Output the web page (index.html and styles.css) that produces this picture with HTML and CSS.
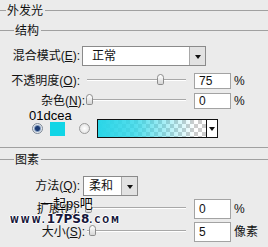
FILE: index.html
```html
<!DOCTYPE html>
<html lang="zh-CN">
<head>
    <meta charset="UTF-8">
    <meta name="viewport" content="width=device-width, initial-scale=1.0">
    <title>外发光</title>
    <link rel="stylesheet" href="styles.css">
</head>
<body>
    <div class="panel">
        <div class="legend legend-main">
            <span class="legend-line legend-lead"></span>
            <span class="legend-text">外发光</span>
            <span class="legend-line legend-rest"></span>
        </div>

        <div class="group group-structure">
            <div class="legend legend-sub">
                <span class="legend-line legend-lead"></span>
                <span class="legend-text">结构</span>
                <span class="legend-line legend-rest"></span>
            </div>

            <div class="row row-blend">
                <label class="label">混合模式(<u>E</u>):</label>
                <div class="select select-blend">
                    <span class="select-value">正常</span>
                    <span class="select-arrow"></span>
                </div>
            </div>

            <div class="row row-opacity">
                <label class="label">不透明度(<u>O</u>):</label>
                <div class="slider"><span class="slider-thumb" style="left: 73px;"></span></div>
                <div class="field">75</div>
                <span class="unit">%</span>
            </div>

            <div class="row">
                <label class="label label-wide">杂色(<u>N</u>):</label>
                <div class="slider"><span class="slider-thumb" style="left: 2px;"></span></div>
                <div class="field">0</div>
                <span class="unit">%</span>
            </div>

            <div class="note">01dcea</div>

            <div class="row row-color">
                <span class="radio radio-on"></span>
                <span class="swatch"></span>
                <span class="radio"></span>
                <div class="gradient">
                    <span class="gradient-fill"></span>
                    <span class="gradient-arrow"></span>
                </div>
            </div>
        </div>

        <div class="group group-elements">
            <div class="legend legend-sub legend-elements">
                <span class="legend-line legend-lead"></span>
                <span class="legend-text">图素</span>
                <span class="legend-line legend-rest"></span>
            </div>

            <div class="row row-method">
                <label class="label">方法(<u>Q</u>):</label>
                <div class="select select-method">
                    <span class="select-value">柔和</span>
                    <span class="select-arrow"></span>
                </div>
            </div>

            <div class="row row-tall">
                <label class="label">扩展(<u>P</u>):</label>
                <div class="slider"><span class="slider-thumb" style="left: 1px;"></span></div>
                <div class="field field-tall">0</div>
                <span class="unit">%</span>
            </div>

            <div class="row row-tall">
                <label class="label label-wide">大小(<u>S</u>):</label>
                <div class="slider"><span class="slider-thumb" style="left: 5px;"></span></div>
                <div class="field field-tall">5</div>
                <span class="unit">像素</span>
            </div>
        </div>

        <!-- watermark stamped over the screenshot -->
        <div class="watermark">
            <div class="wm-title">一起ps吧</div>
            <div class="wm-url"><span class="wm-small">WWW.</span><span class="wm-big">17PS8</span><span class="wm-small">.COM</span></div>
        </div>
    </div>
</body>
</html>
```

FILE: styles.css
```css
body {
    margin: 0;
    padding: 0;
    background-color: #EBEBEB;
    font-family: "Liberation Sans", "Noto Sans CJK SC", sans-serif;
    font-size: 12px;
    line-height: 14px;
    color: #111;
}

.panel {
    position: relative;
    width: 268px;
    height: 247px;
    overflow: hidden;
}

/* group headings with an etched rule */
.legend {
    display: flex;
    align-items: center;
    height: 21px;
}

.legend-line {
    height: 1px;
    background-color: #A0A0A0;
}

.legend-lead {
    width: 6px;
}

.legend-sub {
    height: 19px;
}

.legend-sub .legend-lead {
    width: 14px;
}

.legend-elements {
    height: 23px;
}

.legend-text {
    margin: 0 2px 0 1px;
}

.legend-rest {
    flex: 1;
}

.group-structure {
    padding-bottom: 9px;
    border-bottom: 1px solid #A0A0A0;
}

.row {
    display: flex;
    align-items: center;
    height: 20px;
}

.label {
    flex: none;
    width: 80px;
    text-align: right;
    white-space: nowrap;
}

.label-wide {
    width: 85px;
    margin-right: -5px;
}

.row-blend {
    margin-top: 6px;
}

.row-opacity {
    margin-top: 5px;
}

/* drop-down boxes */
.select {
    display: flex;
    height: 20px;
    margin-left: 2px;
    box-sizing: border-box;
    border: 1px solid #8A8A8A;
    background-color: #FFF;
}

.select-blend {
    width: 124px;
}

.select-method {
    width: 55px;
    margin-left: 3px;
}

.select-value {
    flex: 1;
    padding-left: 9px;
    line-height: 18px;
}

.select-method .select-value {
    padding-left: 5px;
}

.select-arrow {
    position: relative;
    width: 15px;
    border-left: 1px solid #A8A8A8;
    background-color: #E2E2E2;
}

.select-arrow::after,
.gradient-arrow::after {
    content: "";
    position: absolute;
    left: 50%;
    top: 50%;
    margin: -1px 0 0 -3px;
    border-left: 3px solid transparent;
    border-right: 3px solid transparent;
    border-top: 4px solid #111;
}

/* sliders */
.slider {
    position: relative;
    flex: none;
    width: 102px;
    height: 12px;
    margin: -2px 0 0 4px;
}

.slider::before {
    content: "";
    position: absolute;
    left: 3px;
    right: 0;
    top: 5px;
    border-top: 1px solid #A8A8A8;
    border-bottom: 1px solid #FFF;
}

.slider-thumb {
    position: absolute;
    top: 0;
    width: 7px;
    height: 11px;
    box-sizing: border-box;
    border: 1px solid #8C8C8C;
    border-radius: 4px 4px 2px 2px;
    background: linear-gradient(#FFF, #D6D6D6);
}

.field {
    width: 37px;
    height: 16px;
    margin-left: 8px;
    box-sizing: border-box;
    border: 1px solid #A3A3A3;
    background-color: #FFF;
    padding-left: 4px;
    line-height: 14px;
}

.field-tall {
    height: 20px;
    line-height: 18px;
}

.unit {
    margin-left: 3px;
}

/* colour annotation and the colour / gradient choice */
.note {
    height: 7px;
    padding-left: 29px;
    font-size: 13px;
    line-height: 10px;
    color: #000;
}

.radio {
    width: 11px;
    height: 11px;
    box-sizing: border-box;
    border: 1px solid #9A9A9A;
    border-radius: 50%;
    background: radial-gradient(circle, #FFF 0, #DCDCDC 100%);
}

.radio-on {
    margin-left: 32px;
    border-color: #7D8896;
    background: radial-gradient(circle, #1B3A72 0, #1B3A72 2px, #7E98BC 3px, #E4E8EE 4px);
}

.swatch {
    width: 15px;
    height: 14px;
    margin: 1px 14px 0 7px;
    background-color: #10D5E6;
}

.gradient {
    display: flex;
    width: 121px;
    height: 19px;
    margin-left: 7px;
    box-sizing: border-box;
    border: 1px solid #111;
}

.gradient-fill {
    flex: 1;
    background:
        linear-gradient(90deg, #2AD6E8 0%, rgba(42, 214, 232, 0.8) 35%, rgba(42, 214, 232, 0) 90%),
        repeating-conic-gradient(#CDCDCD 0 25%, #FFF 0 50%) 0 0 / 8px 8px;
}

.gradient-arrow {
    position: relative;
    width: 10px;
    border-left: 1px solid #111;
    background-color: #FFF;
}

.row-method {
    margin-top: 5px;
}

.row-tall {
    margin-top: 3px;
}

/* watermark */
.watermark {
    position: absolute;
    left: 10px;
    top: 197px;
}

.wm-title {
    margin-left: 30px;
    font-size: 13px;
    line-height: 13px;
    color: #000;
    text-shadow: 0 0 2px #FFF, 0 0 2px #FFF;
}

.wm-url {
    margin-top: 4px;
    font-family: "DejaVu Sans", sans-serif;
    font-weight: bold;
    line-height: 11px;
    color: #16163A;
    text-shadow: 1px 0 0 #FFF, -1px 0 0 #FFF, 0 1px 0 #FFF, 0 -1px 0 #FFF;
}

.wm-small {
    font-size: 8px;
    letter-spacing: 2px;
}

.wm-big {
    font-size: 12px;
    letter-spacing: 0;
}
```
